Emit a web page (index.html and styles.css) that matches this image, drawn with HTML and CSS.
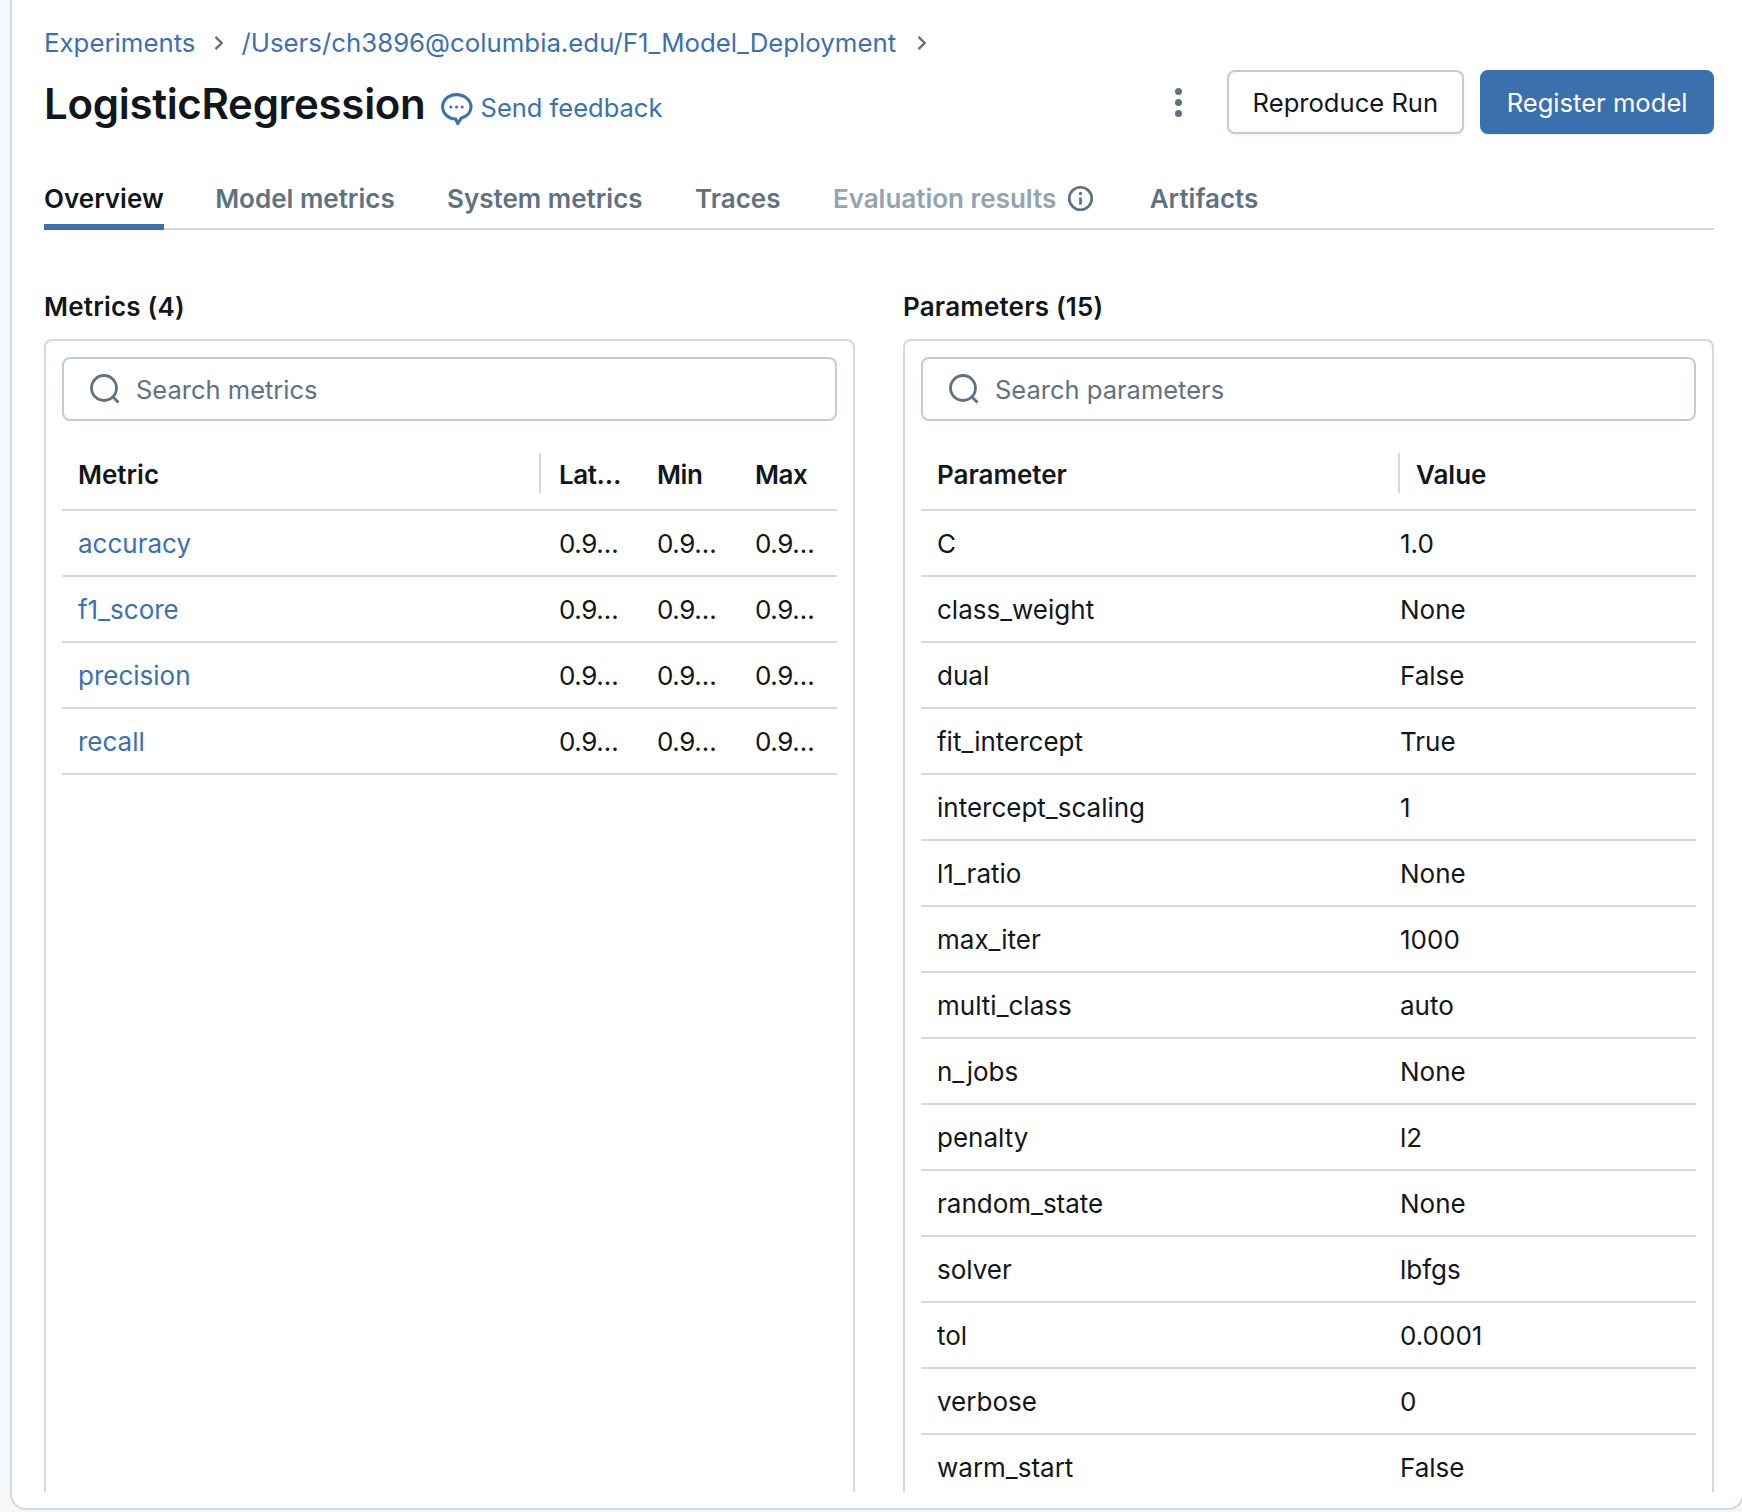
FILE: index.html
```html
<!DOCTYPE html>
<html lang="en">
<head>
    <meta charset="UTF-8">
    <title>LogisticRegression - MLflow Run</title>
    <link rel="stylesheet" href="styles.css">
</head>
<body>
    <div class="frame">
        <nav class="breadcrumb">
            <a href="#">Experiments</a>
            <svg class="crumb-sep" viewBox="0 0 12 16"><path d="M2.500 1.800 8.700 8 2.500 14.200"/></svg>
            <a href="#">/Users/ch3896@columbia.edu/F1_Model_Deployment</a>
            <svg class="crumb-sep" viewBox="0 0 12 16"><path d="M2.500 1.800 8.700 8 2.500 14.200"/></svg>
        </nav>

        <header class="run-header">
            <h1>LogisticRegression</h1>
            <a class="feedback" href="#">
                <svg viewBox="0 0 32 32"><path class="bubble" d="M16 2.500C8.400 2.500 2.500 7.800 2.500 14.400c0 6.500 5.700 11.600 12.600 11.800l2.100 4.300 3.500-5.200c5.600-1.700 9.400-6 9.400-10.900C30 7.800 23.600 2.500 16 2.500Z"/><circle cx="10.500" cy="14.500" r="1.500"/><circle cx="16" cy="14.500" r="1.500"/><circle cx="21.500" cy="14.500" r="1.500"/></svg>
                Send feedback
            </a>
            <div class="actions">
                <span class="kebab"><i></i><i></i><i></i></span>
                <button class="btn">Reproduce Run</button>
                <button class="btn btn-primary">Register model</button>
            </div>
        </header>

        <div class="tabs">
            <a class="tab active" href="#">Overview</a>
            <a class="tab" href="#">Model metrics</a>
            <a class="tab" href="#">System metrics</a>
            <a class="tab" href="#">Traces</a>
            <a class="tab disabled" href="#">Evaluation results
                <svg viewBox="0 0 24 24"><circle cx="12" cy="12" r="10"/><path d="M12 11v6.500"/><circle class="dot" cx="12" cy="7.500" r="1.500"/></svg>
            </a>
            <a class="tab" href="#">Artifacts</a>
        </div>

        <div class="columns">
            <section class="column">
                <h2>Metrics (4)</h2>
                <div class="panel">
                    <div class="search">
                        <svg viewBox="0 0 30 30"><circle cx="14" cy="14" r="12.500"/><path d="m23 23 5.500 5.500"/></svg>
                        <span>Search metrics</span>
                    </div>
                    <div class="row head metrics-row">
                        <div>Metric</div>
                        <div class="divided">Lat…</div>
                        <div>Min</div>
                        <div>Max</div>
                    </div>
                    <div class="row metrics-row"><div><a href="#">accuracy</a></div><div>0.9…</div><div>0.9…</div><div>0.9…</div></div>
                    <div class="row metrics-row"><div><a href="#">f1_score</a></div><div>0.9…</div><div>0.9…</div><div>0.9…</div></div>
                    <div class="row metrics-row"><div><a href="#">precision</a></div><div>0.9…</div><div>0.9…</div><div>0.9…</div></div>
                    <div class="row metrics-row"><div><a href="#">recall</a></div><div>0.9…</div><div>0.9…</div><div>0.9…</div></div>
                </div>
            </section>

            <section class="column">
                <h2>Parameters (15)</h2>
                <div class="panel">
                    <div class="search">
                        <svg viewBox="0 0 30 30"><circle cx="14" cy="14" r="12.500"/><path d="m23 23 5.500 5.500"/></svg>
                        <span>Search parameters</span>
                    </div>
                    <div class="row head params-head">
                        <div>Parameter</div>
                        <div class="divided">Value</div>
                    </div>
                    <div class="row params-row"><div>C</div><div>1.0</div></div>
                    <div class="row params-row"><div>class_weight</div><div>None</div></div>
                    <div class="row params-row"><div>dual</div><div>False</div></div>
                    <div class="row params-row"><div>fit_intercept</div><div>True</div></div>
                    <div class="row params-row"><div>intercept_scaling</div><div>1</div></div>
                    <div class="row params-row"><div>l1_ratio</div><div>None</div></div>
                    <div class="row params-row"><div>max_iter</div><div>1000</div></div>
                    <div class="row params-row"><div>multi_class</div><div>auto</div></div>
                    <div class="row params-row"><div>n_jobs</div><div>None</div></div>
                    <div class="row params-row"><div>penalty</div><div>l2</div></div>
                    <div class="row params-row"><div>random_state</div><div>None</div></div>
                    <div class="row params-row"><div>solver</div><div>lbfgs</div></div>
                    <div class="row params-row"><div>tol</div><div>0.0001</div></div>
                    <div class="row params-row"><div>verbose</div><div>0</div></div>
                    <div class="row params-row"><div>warm_start</div><div>False</div></div>
                </div>
            </section>
        </div>
    </div>
</body>
</html>
```

FILE: styles.css
```css
* {
    box-sizing: border-box;
}
html, body {
    margin: 0;
    height: 100%;
    overflow: hidden;
}
body {
    background-color: #f6f7f9;
    font-family: Inter, "Liberation Sans", sans-serif;
    font-size: 26px;
    color: #11171c;
}
a {
    color: #3a71b0;
    text-decoration: none;
}
.frame {
    display: flex;
    flex-direction: column;
    height: 1510px;
    margin: 0 -2px 0 10px;
    padding: 27px 28px 16px 32px;
    background-color: #fff;
    border: 2px solid #d1d9e1;
    border-top: none;
    border-radius: 0 0 16px 16px;
}

.breadcrumb {
    display: flex;
    align-items: center;
    height: 32px;
    font-size: 25.800px;
    line-height: 32px;
}
.crumb-sep {
    width: 12px;
    height: 16px;
    margin: 0 16px 0 18px;
    fill: none;
    stroke: #5f7281;
    stroke-width: 2.400;
}
.crumb-sep:last-child {
    margin-left: 20px;
}

.run-header {
    display: flex;
    align-items: center;
    height: 64px;
    margin-top: 11px;
}
h1 {
    margin: 4px 0 0;
    font-size: 42px;
    font-weight: 600;
    line-height: 60px;
    letter-spacing: -0.3px;
}
.feedback {
    display: flex;
    align-items: center;
    margin: 12px 0 0 14px;
    font-size: 25.500px;
    line-height: 32px;
}
.feedback svg {
    width: 33px;
    height: 33px;
    margin-right: 8px;
    fill: #3a71b0;
}
.feedback .bubble {
    fill: none;
    stroke: #3a71b0;
    stroke-width: 3;
}
.actions {
    display: flex;
    align-items: center;
    margin-left: auto;
}
.kebab {
    display: flex;
    flex-direction: column;
    gap: 4px;
    margin-right: 45px;
}
.kebab i {
    width: 7px;
    height: 7px;
    border-radius: 50%;
    background-color: #5f7281;
}
.btn {
    height: 64px;
    padding: 0 24px;
    font-family: inherit;
    font-size: 25.600px;
    color: #11171c;
    background-color: #fff;
    border: 2px solid #c0cdd8;
    border-radius: 8px;
    box-shadow: 0 1px 2px rgba(0, 0, 0, 0.08);
}
.btn-primary {
    margin-left: 16px;
    padding: 0 24.500px;
    color: #fff;
    background-color: #3b70ae;
    border-color: #3b70ae;
}

.tabs {
    display: flex;
    gap: 52.400px;
    height: 52px;
    margin-top: 44px;
    border-bottom: 2px solid #d1d9e1;
}
.tab {
    display: flex;
    align-items: center;
    height: 52px;
    padding-bottom: 5px;
    font-weight: 600;
    color: #5f7281;
    border-bottom: 6px solid transparent;
}
.tab.active {
    margin-right: -1px;
    color: #11171c;
    border-bottom-color: #3b70ae;
}
.tab.disabled {
    margin-right: 3px;
    color: #92a4b3;
}
.tab svg {
    width: 27px;
    height: 27px;
    margin-left: 11px;
    fill: none;
    stroke: #5f7281;
    stroke-width: 2.400;
}
.tab svg .dot {
    fill: #5f7281;
    stroke: none;
}

.columns {
    display: grid;
    grid-template-columns: 1fr 1fr;
    gap: 48px;
    flex: 1;
    min-height: 0;
    margin-top: 59px;
}
.column {
    display: flex;
    flex-direction: column;
    min-height: 0;
}
h2 {
    margin: 0 0 14px;
    font-size: 26px;
    font-weight: 600;
    line-height: 36px;
    letter-spacing: 0.2px;
}
.panel {
    flex: 1;
    min-height: 0;
    overflow: hidden;
    padding: 16px 16px 0;
    border: 2px solid #d1d9e1;
    border-bottom: none;
    border-radius: 8px 8px 0 0;
}
.search {
    display: flex;
    align-items: center;
    height: 64px;
    padding-left: 26px;
    font-size: 25.500px;
    color: #5f7281;
    border: 2px solid #c0cdd8;
    border-radius: 8px;
}
.search svg {
    width: 30px;
    height: 30px;
    margin-right: 16px;
    fill: none;
    stroke: #5f7281;
    stroke-width: 2.800;
}

.row {
    display: grid;
    align-items: center;
    height: 66px;
    padding-top: 2px;
    line-height: 36px;
    border-bottom: 2px solid #d1d9e1;
}
.row > div {
    padding-left: 16px;
    white-space: nowrap;
}
.row.head {
    height: 74px;
    margin-top: 16px;
    padding-top: 3px;
    font-weight: 600;
}
.row.head > .divided {
    position: relative;
}
.divided::before {
    content: "";
    position: absolute;
    left: 0;
    top: -4px;
    width: 2px;
    height: 40px;
    background-color: #d1d9e1;
}
.metrics-row .divided::before {
    left: -4px;
}
.metrics-row > div:not(:first-child) {
    letter-spacing: -0.4px;
}
.metrics-row {
    grid-template-columns: 1fr 98px 98px 98px;
}
.params-row {
    grid-template-columns: 463px 1fr;
}
.params-head {
    grid-template-columns: 477px 1fr;
}
.params-head > .divided {
    padding-left: 18px;
}
```
